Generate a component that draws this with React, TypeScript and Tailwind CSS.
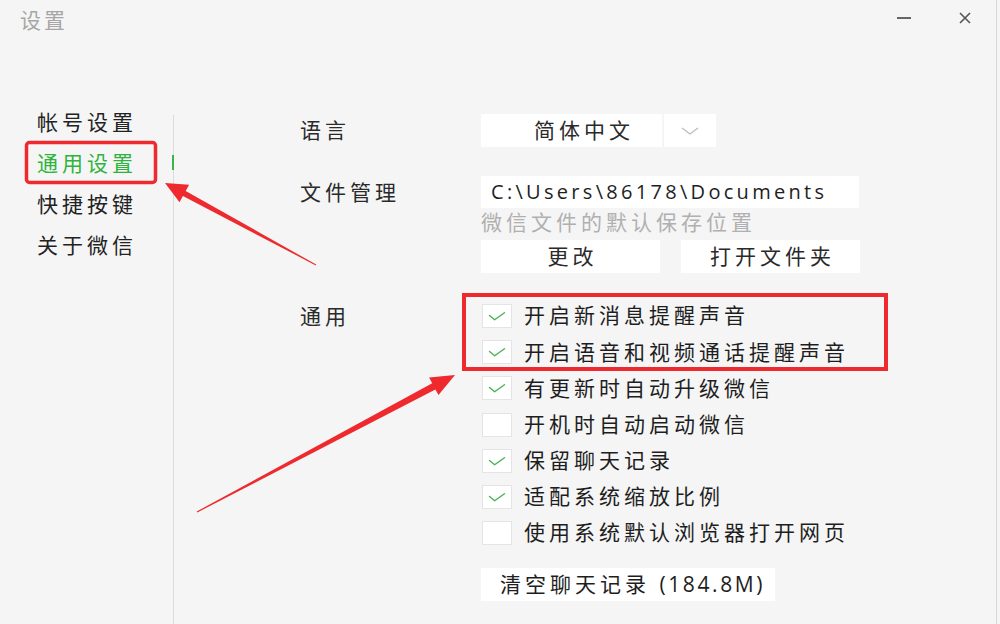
const sideItems = ["帐号设置", "通用设置", "快捷按键", "关于微信"]

const options = [
  { label: "开启新消息提醒声音", on: true },
  { label: "开启语音和视频通话提醒声音", on: true },
  { label: "有更新时自动升级微信", on: true },
  { label: "开机时自动启动微信", on: false },
  { label: "保留聊天记录", on: true },
  { label: "适配系统缩放比例", on: true },
  { label: "使用系统默认浏览器打开网页", on: false },
]

function CheckBox({ on }: { on: boolean }) {
  return (
    <div className="w-[30px] h-[24px] bg-white border border-[#e4e4e4] flex items-center justify-center shrink-0">
      {on && (
        <svg width="30" height="24" viewBox="0 0 30 24">
          <path d="M7 11.5 L12.5 16 L23 8.5" fill="none" stroke="#4cb35a" strokeWidth="1.6" strokeLinecap="round" strokeLinejoin="round" />
        </svg>
      )}
    </div>
  )
}

function Annotations() {
  return (
    <svg className="absolute inset-0 pointer-events-none" width="1000" height="624" viewBox="0 0 1000 624">
      <rect x="26.5" y="142.5" width="129" height="40" rx="3" fill="none" stroke="#ee2a2e" strokeWidth="3.5" />
      <rect x="464" y="295" width="422" height="74" fill="none" stroke="#ee2a2e" strokeWidth="4" />
      <polygon
        points="316.2,264.6 185.7,190.9 189.1,184.7 165,183 179.5,202.3 182.9,196.1 315.8,265.4"
        fill="#ee2a2e"
      />
      <polygon
        points="196.7,511.5 432.2,383.2 429.1,377.5 455,375 438.5,395.1 435.4,389.4 197.3,512.5"
        fill="#ee2a2e"
      />
    </svg>
  )
}

export default function App() {
  return (
    <div className="w-[1000px] h-[624px] bg-[#f5f5f5] relative overflow-hidden font-['Open_Sans','Noto_Sans_CJK_SC',sans-serif]">
      <div className="w-[997px] h-full border-r border-[#d6d6d6] flex flex-col">
        {/* title bar */}
        <div className="h-[100px] flex items-start justify-between shrink-0">
          <div className="pl-[20px] pt-[6px] text-[21px] leading-[28px] tracking-[3px] text-[#a6a6a6]">设置</div>
          <div className="flex items-center h-[36px] pr-[25px] gap-[48px]">
            <div className="w-[14px] h-[1.5px] bg-[#666]" />
            <svg width="12" height="12" viewBox="0 0 12 12">
              <path d="M1 1 L11 11 M11 1 L1 11" stroke="#555" strokeWidth="1.6" />
            </svg>
          </div>
        </div>

        <div className="flex flex-1">
          {/* sidebar */}
          <div className="w-[172px] pt-[2px] text-[21px] tracking-[4px] text-[#222]">
            {sideItems.map((item) => (
              <div
                key={item}
                className={`h-[41px] leading-[41px] pl-[37px] ${item === "通用设置" ? "text-[#2eb33f]" : ""}`}
              >
                {item}
              </div>
            ))}
          </div>
          <div className="w-[2px] mt-[15px] flex flex-col">
            <div className="h-[40px] mx-auto w-px bg-[#dcdcdc]" />
            <div className="h-[15px] w-[2px] bg-[#39b54a]" />
            <div className="flex-1 mx-auto w-px bg-[#dcdcdc]" />
          </div>

          {/* content */}
          <div className="flex-1 pl-[126px] text-[21px] tracking-[4px] text-[#2a2a2a]">
            <div className="grid grid-cols-[181px_1fr] mt-[14px] h-[33px] items-center">
              <div>语言</div>
              <div className="flex gap-[2px] h-[33px]">
                <div className="w-[181px] bg-white pl-[53px] leading-[33px]">简体中文</div>
                <div className="w-[52px] bg-white flex items-center justify-center">
                  <svg width="18" height="8" viewBox="0 0 18 8">
                    <path d="M1 1 L9 7 L17 1" fill="none" stroke="#bcbcbc" strokeWidth="1.2" />
                  </svg>
                </div>
              </div>
            </div>

            <div className="grid grid-cols-[181px_1fr] mt-[29px]">
              <div className="h-[32px] leading-[32px]">文件管理</div>
              <div>
                <div className="w-[378px] h-[32px] bg-white pl-[10px] leading-[32px] tracking-[3.3px] text-[20px] text-[#1e1e1e]">
                  C:\Users\86178\Documents
                </div>
                <div className="h-[28px] leading-[28px] text-[#b0b0b0]">微信文件的默认保存位置</div>
                <div className="flex gap-[21px] mt-[4px]">
                  <div className="w-[179px] h-[33px] bg-white leading-[33px] text-center pl-[4px]">更改</div>
                  <div className="w-[179px] h-[33px] bg-white leading-[33px] text-center pl-[4px]">打开文件夹</div>
                </div>
              </div>
            </div>

            <div className="grid grid-cols-[181px_1fr] mt-[25px]">
              <div className="h-[36px] leading-[36px]">通用</div>
              <div>
                {options.map((o) => (
                  <div key={o.label} className="h-[36.2px] flex items-center gap-[12px] pl-px text-[#1e1e1e]">
                    <CheckBox on={o.on} />
                    <span>{o.label}</span>
                  </div>
                ))}
                <div className="mt-[17px] w-[294px] h-[33px] bg-white leading-[33px] pl-[19px] text-[#1e1e1e] whitespace-nowrap">
                  清空聊天记录 <span className="tracking-[2.6px]">(184.8M)</span>
                </div>
              </div>
            </div>
          </div>
        </div>
      </div>
      <Annotations />
    </div>
  )
}
